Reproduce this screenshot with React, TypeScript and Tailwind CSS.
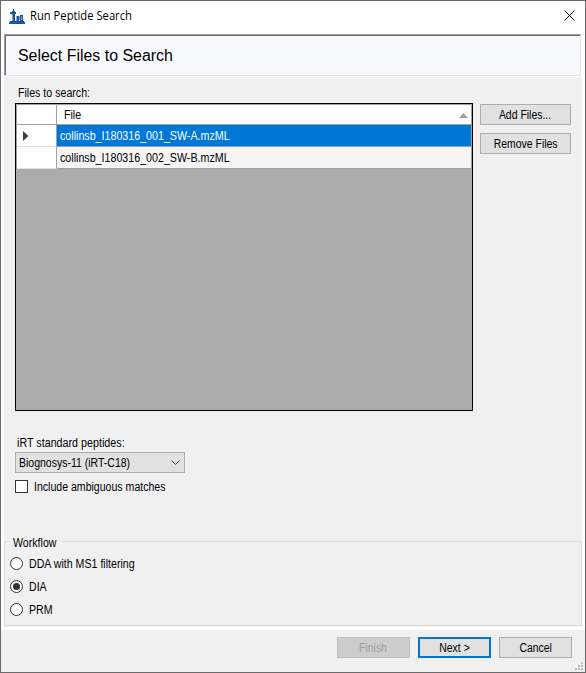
import type { ReactNode } from "react";

function T({ children, className = "origin-left scale-x-[.885]" }: { children: ReactNode; className?: string }) {
  return <span className={`inline-block whitespace-pre pt-px text-[12px] ${className}`}>{children}</span>;
}

function Btn({ children, className = "border border-[#adadad] bg-[#e1e1e1]" }: { children: ReactNode; className?: string }) {
  return (
    <button className={`flex h-[21px] items-center justify-center pt-px ${className}`}>
      <T className="scale-x-[.87]">{children}</T>
    </button>
  );
}

function Radio({ label, checked = false }: { label: string; checked?: boolean }) {
  return (
    <label className="flex h-[23px] items-center">
      <svg width="13" height="13" viewBox="0 0 13 13" className="mr-[6px] shrink-0">
        <circle cx="6.5" cy="6.5" r="6" fill="#fff" stroke="#333" />
        {checked && <circle cx="6.5" cy="6.5" r="3.5" fill="#333" />}
      </svg>
      <T className="mt-px origin-left scale-x-[.885]">{label}</T>
    </label>
  );
}

const files = ["collinsb_I180316_001_SW-A.mzML", "collinsb_I180316_002_SW-B.mzML"];

export default function App() {
  return (
    <div className="flex h-[673px] w-[586px] flex-col overflow-hidden whitespace-nowrap border border-[#6b6b6b] bg-white font-['Liberation_Sans',sans-serif] text-[12px] leading-[13px] text-black">
      <header className="flex h-[33px] shrink-0 items-center">
        <svg width="16" height="15" viewBox="0 0 16 15" className="ml-[8px] mt-[-3px]">
          <path fill="#1f559b" d="M0 13h16v2H0z M4 0h1v2H4z M3 2h3v1H3z M1 3h6v2H1z M3 5h3v8H3z M7 7h3v5H7z M11 6h3v6h-3z M1 12h14v1H1z" />
          <path fill="#7fa5d3" d="M3 6h1v6H3z M10 7h1v4h-1z M7 7h1v5H7z M12 7h1v4h-1z" />
        </svg>
        <h1 className="ml-[5px] mt-[-4px] origin-left scale-x-[.935] font-['Open_Sans',sans-serif] text-[12px]">Run Peptide Search</h1>
        <svg width="11" height="11" viewBox="0 0 11 11" className="ml-auto mr-[10px] mt-[-5px]" stroke="#000" fill="none">
          <path d="M.5.5l10 10M10.5.5l-10 10" />
        </svg>
      </header>

      <div className="ml-[3px] mr-[4px] h-[42px] shrink-0 border border-b-[#e3e3e3] border-l-[#a0a0a0] border-r-[#e3e3e3] border-t-[#a0a0a0]">
        <div className="flex h-full items-center border-l border-t border-[#696969] bg-[#f8f9ff] pl-[12px] text-[16px]">
          <span className="inline-block origin-left scale-x-[.995]">Select Files to Search</span>
        </div>
      </div>

      <main className="mx-[3px] mt-px flex h-[550px] shrink-0 flex-col bg-[#f0f0f0]">
        <div className="flex h-[26px] items-end pb-[3px] pl-[14px]"><T>Files to search:</T></div>
        <div className="ml-[11px] flex">
          <div className="h-[308px] w-[458px] shrink-0 border border-black bg-[#ababab]">
            <div className="flex h-[21px] border-b border-l border-t border-[#a0a0a0] bg-white">
              <div className="w-[40px] border-r border-[#a0a0a0]" />
              <div className="flex flex-1 items-center justify-between border-r border-[#a0a0a0] pl-[7px] pr-[3px]">
                <T>File</T>
                <svg width="9" height="5" viewBox="0 0 9 5" fill="#a0a0a0" className="mt-[2px]"><path d="M4.5 0L9 5H0z" /></svg>
              </div>
            </div>
            {files.map((f, i) => (
              <div key={f} className="flex h-[22px] border-l border-[#a0a0a0]">
                <div className="flex w-[40px] items-center border-b border-r border-b-[#e3e3e3] border-r-[#a0a0a0] bg-white pl-[6px] pt-px">
                  {i === 0 && <svg width="6" height="10" viewBox="0 0 6 10" fill="#404040"><path d="M0 0l5.5 5L0 10z" /></svg>}
                </div>
                <div className={`flex flex-1 items-center border-b border-r border-[#a0a0a0] pl-[2.5px] ${i === 0 ? "bg-[#0078d7] text-white" : "bg-[#f5f5f5]"}`}>
                  <T className="origin-left scale-x-[.89]">{f}</T>
                </div>
              </div>
            ))}
          </div>
          <div className="ml-[7px] flex w-[91px] flex-col gap-2 pt-px">
            <Btn>Add Files...</Btn>
            <Btn>Remove Files</Btn>
          </div>
        </div>

        <div className="ml-[13px] flex h-[41px] items-end pb-[2px]"><T className="origin-left scale-x-[.895]">iRT standard peptides:</T></div>
        <div className="ml-[11px] flex h-[21px] w-[170px] items-center justify-between border border-[#adadad] bg-[#e1e1e1] pl-[3px] pr-[4px]">
          <T className="mt-px origin-left scale-x-[.875]">Biognosys-11 (iRT-C18)</T>
          <svg width="9" height="6" viewBox="0 0 9 6" fill="none" stroke="#404040"><path d="M.5.5l4 4 4-4" /></svg>
        </div>
        <label className="ml-[11px] mt-[7px] flex h-[13px] items-center">
          <span className="mr-[6px] size-[13px] border border-[#333] bg-white" />
          <T className="mt-px origin-left scale-x-[.88]">Include ambiguous matches</T>
        </label>

        <fieldset className="mb-[1px] mt-auto h-[91px] border border-[#dcdcdc] pl-[5px]">
          <legend className="ml-[1px] h-[13px] w-[50px] px-[2px]"><T className="mt-px origin-left scale-x-[.885]">Workflow</T></legend>
          <div className="pt-1">
            <Radio label="DDA with MS1 filtering" />
            <Radio label="DIA" checked />
            <Radio label="PRM" />
          </div>
        </fieldset>
      </main>

      <footer className="mt-[3px] flex flex-1 bg-[#f0f0f0] pl-[336px] pt-[7px]">
        <Btn className="w-[73px] border border-[#bfbfbf] bg-[#cccccc] text-[#a0a0a0]">Finish</Btn>
        <Btn className="ml-[8px] w-[73px] border-2 border-[#0078d7] bg-[#e1e1e1]">Next &gt;</Btn>
        <Btn className="ml-[8px] w-[73px] border border-[#adadad] bg-[#e1e1e1]">Cancel</Btn>
        <svg width="8" height="8" viewBox="0 0 8 8" className="ml-[3px] mt-[25px]" fill="#bfbfbf">
          <path d="M6 0h2v2H6zM3 3h2v2H3zM6 3h2v2H6zM0 6h2v2H0zM3 6h2v2H3zM6 6h2v2H6z" />
        </svg>
      </footer>
    </div>
  );
}
